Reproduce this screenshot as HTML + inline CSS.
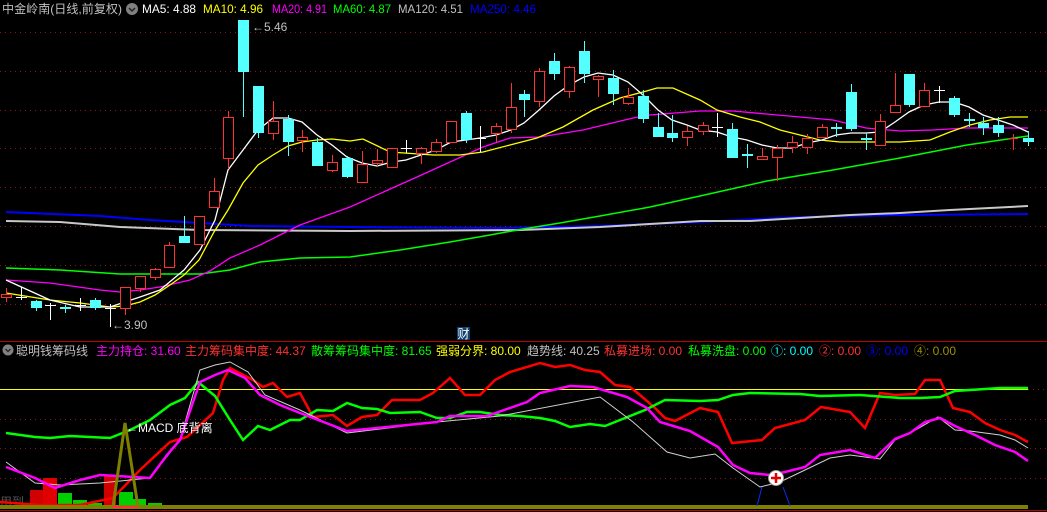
<!DOCTYPE html><html><head><meta charset="utf-8"><style>
html,body{margin:0;padding:0;background:#000;width:1047px;height:512px;overflow:hidden}
svg{display:block}
text{font-family:"Liberation Sans","Noto Sans CJK SC",sans-serif;font-size:12px}
</style></head><body>
<svg width="1047" height="512" viewBox="0 0 1047 512" xmlns="http://www.w3.org/2000/svg">
<g stroke="#8a1a1a" stroke-dasharray="1 4" stroke-width="1">
<line x1="0" y1="32.5" x2="1047" y2="32.5"/><line x1="0" y1="71.5" x2="1047" y2="71.5"/><line x1="0" y1="110.5" x2="1047" y2="110.5"/><line x1="0" y1="148.5" x2="1047" y2="148.5"/><line x1="0" y1="187.5" x2="1047" y2="187.5"/><line x1="0" y1="226.5" x2="1047" y2="226.5"/><line x1="0" y1="265.5" x2="1047" y2="265.5"/><line x1="0" y1="304.5" x2="1047" y2="304.5"/>
<line x1="0" y1="419.5" x2="1047" y2="419.5"/><line x1="0" y1="448.5" x2="1047" y2="448.5"/><line x1="0" y1="478.5" x2="1047" y2="478.5"/><line x1="1028" y1="389.5" x2="1047" y2="389.5"/>
</g>
<g fill="none" stroke-width="1.3">
<polyline stroke="#0000ff" stroke-width="2" points="6,212 100,216 150,220 250,226 350,227 500,228 600,226 700,222 800,217 900,215 1028,214"/>
<polyline stroke="#c8c8c8" stroke-width="2" points="6,221 60,222 120,227 200,230 350,231 520,230 600,227 700,221 750,221 800,218 850,215 900,213 950,210 1028,206"/>
<polyline stroke="#00ff00" stroke-width="1.5" points="6,268 60,270 120,274 200,274 230,270 260,262 300,258 350,257 400,250 450,242 490,235 523,229 560,223 600,216 650,207 700,196 767,181 833,170 900,158 967,145 1028,136"/>
<polyline stroke="#ff00ff" points="6,280 50,283 100,290 120,292 140,290 160,287 190,280 210,271 230,258 260,245 300,225 350,207 417,177 483,147 510,138 540,137 583,130 633,118 650,115 700,111 733,111 800,117 833,120 866,128 900,131 933,130 966,128 1028,128"/>
<polyline stroke="#ffff00" points="6,293 50,300 80,303 110,307 125,306 140,302 155,295 170,285 184,275 199,260 214,232 228,210 243,183 258,165 273,155 288,146 302,142 317,140 332,139 350,141 363,139 390,152 433,155 460,155 483,152 510,145 537,138 563,127 593,110 620,98 643,92 657,88 673,88 700,100 717,110 740,117 760,122 780,130 800,135 820,140 840,142 860,142 900,142 930,140 950,132 970,125 990,120 1010,117 1028,117"/>
<polyline stroke="#ffffff" points="6,280 50,300 80,307 110,307 125,302 140,297 160,290 184,270 200,250 215,220 228,170 243,150 258,130 273,118 288,118 302,122 317,135 332,145 347,157 362,163 377,166 392,162 406,160 421,155 436,150 451,142 466,140 480,138 496,135 511,130 524,123 539,110 554,96 569,85 584,77 598,73 613,75 628,82 643,95 658,110 672,120 687,125 700,130 717,132 732,137 747,140 762,145 777,148 792,148 807,143 822,140 836,135 851,133 866,133 880,132 895,122 909,112 924,105 939,102 954,102 969,107 983,115 998,120 1013,125 1028,132"/>
</g>
<path stroke="#ff3232" stroke-width="1" fill="none" d="M6.5 288V302M125.5 287V315M140.5 276V292M155.5 268V280M169.5 242V267M199.5 216V245M214.5 178V208M228.5 111V169M273.5 101V140M302.5 130V152M332.5 155V172M362.5 151V183M377.5 149V166M392.5 148V167M421.5 147V164M436.5 139V153M451.5 121V143M496.5 123V142M511.5 83V133M539.5 68V107M569.5 66V98M598.5 75V97M628.5 88V105M687.5 126V146M703.5 122V135M762.5 148V160M777.5 145V181M792.5 136V153M807.5 134V154M822.5 124V137M880.5 114V146M895.5 73V113M924.5 83V107M1013.5 134V150M1008 138.5H1018"/>
<g stroke="#ff3232" fill="#000"><rect x="1.5" y="294.5" width="10" height="3"/><rect x="120.5" y="287.5" width="10" height="21"/><rect x="135.5" y="276.5" width="10" height="12"/><rect x="150.5" y="269.5" width="10" height="8"/><rect x="164.5" y="245.5" width="10" height="22"/><rect x="194.5" y="216.5" width="10" height="28"/><rect x="209.5" y="191.5" width="10" height="16"/><rect x="223.5" y="117.5" width="10" height="41"/><rect x="268.5" y="121.5" width="10" height="12"/><rect x="297.5" y="137.5" width="10" height="3"/><rect x="327.5" y="162.5" width="10" height="8"/><rect x="357.5" y="164.5" width="10" height="18"/><rect x="372.5" y="160.5" width="10" height="3"/><rect x="387.5" y="148.5" width="10" height="19"/><rect x="416.5" y="148.5" width="10" height="5"/><rect x="431.5" y="142.5" width="10" height="9"/><rect x="446.5" y="121.5" width="10" height="21"/><rect x="491.5" y="126.5" width="10" height="7"/><rect x="506.5" y="107.5" width="10" height="22"/><rect x="534.5" y="71.5" width="10" height="30"/><rect x="564.5" y="67.5" width="10" height="24"/><rect x="593.5" y="76.5" width="10" height="3"/><rect x="623.5" y="97.5" width="10" height="6"/><rect x="682.5" y="131.5" width="10" height="6"/><rect x="698.5" y="125.5" width="10" height="6"/><rect x="757.5" y="156.5" width="10" height="3"/><rect x="772.5" y="148.5" width="10" height="9"/><rect x="787.5" y="142.5" width="10" height="5"/><rect x="802.5" y="138.5" width="10" height="9"/><rect x="817.5" y="127.5" width="10" height="10"/><rect x="875.5" y="121.5" width="10" height="24"/><rect x="890.5" y="105.5" width="10" height="7"/><rect x="919.5" y="90.5" width="10" height="16"/></g>
<path stroke="#54ffff" stroke-width="1" fill="none" d="M36.5 300V311M65.5 305V313M95.5 298V310M184.5 216V243M243.5 20V117M258.5 86V138M288.5 115V156M317.5 138V166M347.5 156V178M466.5 111V143M524.5 90V117M554.5 53V80M584.5 41V83M613.5 70V105M643.5 90V123M658.5 113V137M672.5 115V142M732.5 123V158M747.5 144V168M836.5 123V137M851.5 84V131M866.5 133V150M909.5 74V107M954.5 96V117M969.5 113V127M983.5 117V135M998.5 117V137M1028.5 131V146"/>
<g fill="#54ffff"><rect x="31" y="301" width="11" height="7"/><rect x="60" y="307" width="11" height="2"/><rect x="90" y="300" width="11" height="8"/><rect x="179" y="236" width="11" height="7"/><rect x="238" y="20" width="11" height="52"/><rect x="253" y="86" width="11" height="47"/><rect x="283" y="119" width="11" height="23"/><rect x="312" y="142" width="11" height="24"/><rect x="342" y="158" width="11" height="19"/><rect x="461" y="113" width="11" height="27"/><rect x="519" y="94" width="11" height="6"/><rect x="549" y="61" width="11" height="13"/><rect x="579" y="51" width="11" height="23"/><rect x="608" y="78" width="11" height="16"/><rect x="638" y="96" width="11" height="23"/><rect x="653" y="127" width="11" height="10"/><rect x="667" y="133" width="11" height="5"/><rect x="727" y="129" width="11" height="29"/><rect x="742" y="154" width="11" height="2"/><rect x="831" y="127" width="11" height="2"/><rect x="846" y="92" width="11" height="37"/><rect x="861" y="138" width="11" height="2"/><rect x="904" y="74" width="11" height="31"/><rect x="949" y="98" width="11" height="17"/><rect x="964" y="119" width="11" height="2"/><rect x="978" y="123" width="11" height="5"/><rect x="993" y="125" width="11" height="8"/><rect x="1023" y="138" width="11" height="4"/></g>
<path stroke="#fff" stroke-width="1" fill="none" d="M21.5 287V300M16 297.5H27M50.5 303V320M45 305.5H56M80.5 298V311M75 305.5H86M110.5 304V327M105 308.5H116M406.5 140V153M401 148.5H412M480.5 126V152M475 138.5H486M717.5 113V137M712 127.5H723M939.5 86V103M934 90.5H945"/>
<text x="252" y="31" fill="#c0c0c0">←5.46</text>
<text x="112" y="329" fill="#c0c0c0">←3.90</text>
<text x="2" y="13" fill="#c0c0c0" textLength="120" lengthAdjust="spacingAndGlyphs">中金岭南(日线,前复权)</text>
<circle cx="132" cy="9" r="6" fill="#808080"/><path d="M129 8l3 3 3-3" stroke="#222" stroke-width="1.5" fill="none"/>
<text x="142" y="13" fill="#fff" textLength="54" lengthAdjust="spacingAndGlyphs">MA5: 4.88</text>
<text x="203" y="13" fill="#ffff00" textLength="60" lengthAdjust="spacingAndGlyphs">MA10: 4.96</text>
<text x="272" y="13" fill="#ff00ff" textLength="55" lengthAdjust="spacingAndGlyphs">MA20: 4.91</text>
<text x="333" y="13" fill="#00ff00" textLength="58" lengthAdjust="spacingAndGlyphs">MA60: 4.87</text>
<text x="398" y="13" fill="#c0c0c0" textLength="65" lengthAdjust="spacingAndGlyphs">MA120: 4.51</text>
<text x="470" y="13" fill="#0000ff" textLength="66" lengthAdjust="spacingAndGlyphs">MA250: 4.46</text>
<rect x="457" y="327" width="13" height="13" fill="#104070"/><text x="457.5" y="338" fill="#fff">财</text>
<line x1="0" y1="341.5" x2="1047" y2="341.5" stroke="#c00000"/>
<circle cx="8" cy="350" r="5.5" fill="#808080"/><path d="M5.5 349l2.5 2.5 2.5-2.5" stroke="#222" stroke-width="1.3" fill="none"/>
<text x="16" y="355" fill="#c0c0c0">聪明钱筹码线</text>
<text x="96" y="355" fill="#ff00ff">主力持仓: 31.60</text>
<text x="185" y="355" fill="#ff3232">主力筹码集中度: 44.37</text>
<text x="311" y="355" fill="#00ff00">散筹筹码集中度: 81.65</text>
<text x="436" y="355" fill="#ffff00">强弱分界: 80.00</text>
<text x="527" y="355" fill="#c0c0c0">趋势线: 40.25</text>
<text x="604" y="355" fill="#ff3232">私募进场: 0.00</text>
<text x="688" y="355" fill="#00ff00">私募洗盘: 0.00</text>
<text x="771" y="355" fill="#00ffff">①: 0.00</text>
<text x="819" y="355" fill="#ff3232">②: 0.00</text>
<text x="866" y="355" fill="#0000ff">③: 0.00</text>
<text x="914" y="355" fill="#a09000">④: 0.00</text>
<line x1="0" y1="389.5" x2="1028" y2="389.5" stroke="#ffff00"/>
<text x="0" y="506" fill="#555">用到</text>
<g>
<rect x="30" y="490" width="13" height="17" fill="#d00000"/><rect x="43" y="478" width="14" height="29" fill="#e00000"/><rect x="58" y="493" width="14" height="14" fill="#00d000"/><rect x="73" y="500" width="14" height="7" fill="#00d000"/><rect x="88" y="503" width="14" height="4" fill="#00d000"/><rect x="104" y="476" width="12" height="31" fill="#d00000"/><rect x="119" y="492" width="14" height="15" fill="#00d000"/><rect x="133" y="499" width="13" height="8" fill="#00d000"/><rect x="148" y="503" width="14" height="4" fill="#00d000"/><rect x="163" y="505" width="13" height="2" fill="#00d000"/>
</g>
<g fill="none" stroke-width="2.5">
<polyline stroke="#ff0000" points="0,502 40,505 80,505 113,498 140,470 170,442 187,437 213,413 223,380 230,368 253,380 263,387 273,383 287,397 300,393 313,417 333,415 347,426 362,417 377,415 392,400 420,400 433,393 450,378 465,395 480,395 495,380 510,372 540,363 555,367 570,365 585,370 600,372 615,385 630,387 640,395 655,408 665,418 675,421 700,408 718,412 732,443 762,440 775,428 805,420 821,407 850,412 865,428 880,393 895,395 915,394 925,380 940,380 953,408 970,412 985,423 1000,430 1015,435 1028,442"/>
<polyline stroke="#00ff00" points="6,433 35,437 50,438 70,436 110,438 130,430 150,420 170,405 185,398 198,382 215,396 230,420 243,440 258,426 270,430 290,420 300,420 317,410 333,411 347,403 362,408 377,409 390,413 420,412 437,418 450,418 467,412 480,412 500,415 520,416 540,418 555,421 570,427 590,424 605,426 620,420 645,410 665,400 700,401 718,400 733,395 750,393 800,394 820,396 860,395 900,398 920,398 940,397 955,391 1000,388 1028,388"/>
</g>
<polyline fill="none" stroke="#d0d0d0" stroke-width="1" points="6,462 35,483 60,485 100,483 150,478 180,440 200,370 215,365 230,362 248,372 265,395 300,410 347,433 437,422 500,416 600,397 633,422 667,452 690,458 715,454 733,468 760,487 780,482 805,470 830,458 850,455 880,459 895,440 912,432 938,417 955,430 970,431 1000,435 1015,440 1028,448"/>
<polyline fill="none" stroke="#ff00ff" stroke-width="2.5" points="6,467 35,478 55,488 80,480 100,475 150,478 167,455 180,440 200,382 215,375 228,370 245,378 260,395 280,405 300,413 347,431 437,422 450,416 487,416 527,402 540,393 570,386 593,387 627,397 647,408 660,422 690,431 718,447 733,465 750,473 770,475 785,472 805,467 820,455 850,450 875,458 895,439 910,433 925,422 940,418 955,426 975,435 995,445 1015,452 1028,461"/>
<polyline fill="none" stroke="#808000" stroke-width="3" points="113,507 125,423 138,507"/>
<rect x="0" y="505" width="1028" height="4" fill="#808000"/>
<line x1="0" y1="510.5" x2="1047" y2="510.5" stroke="#c00000"/>
<rect x="112" y="506" width="26" height="2" fill="#ff3232"/>
<text x="126" y="432" fill="#fff">←MACD 底背离</text>
<path d="M762 487L757 506M783 487L790 506" stroke="#0030ff" stroke-width="1"/>
<circle cx="776" cy="478" r="7.5" fill="#fff" stroke="#999"/>
<path d="M771 478H781M776 473V483" stroke="#e00000" stroke-width="2.5"/>
</svg>
</body></html>
